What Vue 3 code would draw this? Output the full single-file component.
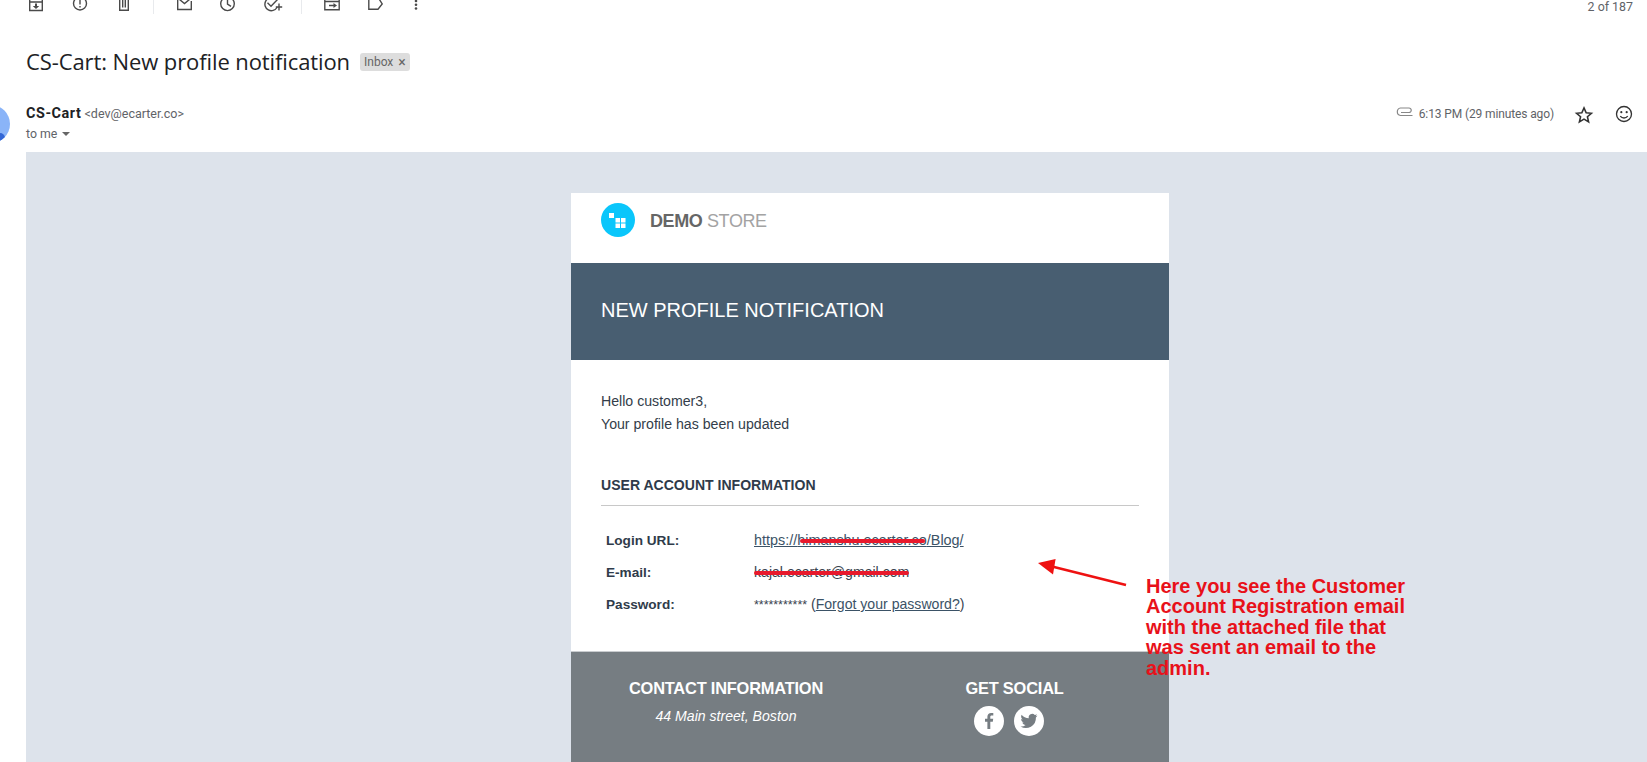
<script setup>
const rows = [
  { label: 'Login URL:', kind: 'url' },
  { label: 'E-mail:', kind: 'mail' },
  { label: 'Password:', kind: 'pass' }
]
</script>

<template>
  <div class="page">
    <div class="toolbar">
      <svg class="ic w14 m29" viewBox="0 0 14 12"><path d="M.7-2V10.500H13.300V-2M.7 2H13.300" /><path class="solid" d="M6 3.500h2V6h2.200L7 9 3.800 6H6z" /></svg>
      <svg class="ic w14 m30" viewBox="0 0 14 12"><circle cx="7" cy="3.500" r="6.500" /><path d="M7 0v4.500M7 6v1.500" /></svg>
      <svg class="ic w10 m32" viewBox="0 0 10 12"><path d="M.7-2V10.300H9.300V-2M3.700 0v7.500M6.300 0v7.500" /></svg>
      <span class="sep m24"></span>
      <svg class="ic w15 m23" viewBox="0 0 15 12"><path d="M.7-1V9.500H14.300V1M.7-2 7.500 3.500 14.300-2" /></svg>
      <svg class="ic w15 m28" viewBox="0 0 15 12"><circle cx="7.500" cy="3.800" r="6.800" /><path d="M7.500 0v4l3.500 2.300" /></svg>
      <svg class="ic w18 m29" viewBox="0 0 18 12"><path d="M13 7.500A6.500 6.500 0 1 1 10 -1.800M3.500 2.800 7 6.200 14-1M15 3.500v7M11.800 7h6.400" /></svg>
      <span class="sep m19"></span>
      <svg class="ic w16 m22" viewBox="0 0 16 12"><path d="M.8-2V9.700H15.200V-2M.8 1.500H15.200M5 5.500h5" /><path class="solid" d="M9.500 3 13 5.500 9.500 8z" /></svg>
      <svg class="ic w15 m28" viewBox="0 0 15 12"><path d="M.8-2V9.200H10L14.200 4 10.500-2" /></svg>
      <svg class="dots" viewBox="0 0 4 12"><circle cx="2" cy="1" r="1.300" /><circle cx="2" cy="4.800" r="1.300" /><circle cx="2" cy="8.500" r="1.300" /></svg>
      <span class="count">2 of 187</span>
    </div>

    <div class="subject-row">
      <h1 class="subject">CS-Cart: New profile notification</h1>
      <span class="chip">Inbox <i>×</i></span>
    </div>

    <div class="sender-row">
      <span class="avatar"><span class="dot"></span></span>
      <div class="sender">
        <div class="from"><b>CS-Cart</b> <span>&lt;dev@ecarter.co&gt;</span></div>
        <div class="to">to me <span class="caret"></span></div>
      </div>
      <div class="meta">
        <svg class="clip" viewBox="0 0 17 10"><path d="M16.500 8.500H4.500A3.800 3.800 0 0 1 4.500 1h8.500a2.200 2.200 0 0 1 0 4.500H5" /></svg>
        <span class="time">6:13 PM (29 minutes ago)</span>
        <svg class="star" viewBox="0 0 24 24"><path d="m12 3.500 2.600 5.800 6.300.6-4.800 4.200 1.400 6.200L12 17l-5.500 3.300 1.400-6.200L3.100 9.900l6.300-.6z" /></svg>
        <svg class="smile" viewBox="0 0 24 24"><circle cx="12" cy="12" r="9" /><circle class="fill" cx="8.800" cy="9.800" r="1.300" /><circle class="fill" cx="15.200" cy="9.800" r="1.300" /><path d="M7.500 14.500c2.400 3 6.600 3 9 0" /></svg>
      </div>
    </div>

    <div class="mail-bg">
      <div class="card">
        <div class="brand">
          <span class="logo">
            <svg viewBox="0 0 34 34"><circle cx="17" cy="17" r="17" fill="#0ac6fb" /><g fill="#fff"><rect x="8" y="10" width="5" height="5" /><rect x="14.500" y="15" width="4.500" height="4.500" /><rect x="20" y="15" width="4.500" height="4.500" /><rect x="14.500" y="20.500" width="4.500" height="4.500" /><rect x="20" y="20.500" width="4.500" height="4.500" /></g></svg>
          </span>
          <span class="store"><b>DEMO</b> STORE</span>
        </div>
        <div class="banner">NEW PROFILE NOTIFICATION</div>
        <div class="body">
          <p class="hello">Hello customer3,<br />Your profile has been updated</p>
          <h2 class="section">USER ACCOUNT INFORMATION</h2>
          <div class="rows">
            <div v-for="r in rows" :key="r.kind" class="row">
              <b class="label">{{ r.label }}</b>
              <span v-if="r.kind === 'url'" class="val url"><a>https://<span class="hidden">himanshu.ecarter.co</span>/Blog/</a><s class="red u"></s></span>
              <span v-else-if="r.kind === 'mail'" class="val">kajal.ecarter@gmail.com<s class="red m"></s></span>
              <span v-else class="val"><span class="stars">***********</span> (<a>Forgot your password?</a>)</span>
            </div>
          </div>
        </div>
        <div class="footer">
          <div class="contact">
            <h3>CONTACT INFORMATION</h3>
            <em>44 Main street, Boston</em>
          </div>
          <div class="social">
            <h3>GET SOCIAL</h3>
            <div class="icons">
              <svg viewBox="0 0 30 30"><circle cx="15" cy="15" r="15" fill="#fff" /><path fill="#767d82" d="M16.300 23v-7.300h2.500l.4-2.900h-2.900V11c0-.8.300-1.400 1.500-1.400h1.500V7c-.3 0-1.200-.1-2.200-.1-2.200 0-3.700 1.300-3.700 3.800v2.100H11v2.900h2.400V23z" /></svg>
              <svg viewBox="0 0 30 30"><circle cx="15" cy="15" r="15" fill="#fff" /><path fill="#767d82" d="M23.500 9.600c-.6.300-1.300.5-2 .6.700-.4 1.300-1.100 1.500-1.900-.7.400-1.400.7-2.200.8a3.500 3.500 0 0 0-6 3.200c-2.900-.1-5.500-1.500-7.200-3.600-.9 1.600-.5 3.600 1.100 4.700-.6 0-1.100-.2-1.600-.4 0 1.700 1.200 3.100 2.800 3.400-.5.100-1 .2-1.600.1.500 1.400 1.700 2.400 3.300 2.400A7 7 0 0 1 6.500 20.400a10 10 0 0 0 15.400-8.900c.6-.5 1.200-1.100 1.600-1.900z" /></svg>
            </div>
          </div>
        </div>
      </div>
    </div>

    <svg class="arrow" viewBox="0 0 90 30"><path d="M8 7 88 27" stroke="#ee1111" stroke-width="2.500" /><path d="M0 5 17.600 1 15 16.600z" fill="#ee1111" /></svg>
    <p class="note">Here you see the Customer Account Registration email with the attached file that was sent an email to the admin.</p>
  </div>
</template>

<style>
html, body { margin: 0; overflow: hidden; background: #fff; }
</style>

<style scoped>
.page { position: relative; width: 1647px; height: 762px; overflow: hidden; background: #fff; font-family: "Roboto", "Liberation Sans", sans-serif; color: #222; }
.toolbar { height: 20px; display: flex; align-items: flex-start; }
.ic { height: 12px; flex: none; fill: none; stroke: #4a4a4a; stroke-width: 1.400; overflow: visible; }
.ic .solid { fill: #4a4a4a; stroke: none; }
.w10 { width: 10px; } .w14 { width: 14px; } .w15 { width: 15px; } .w16 { width: 16px; } .w18 { width: 18px; }
.m19 { margin-left: 19px; } .m22 { margin-left: 22px; } .m23 { margin-left: 23px; } .m24 { margin-left: 24px; } .m28 { margin-left: 28px; } .m29 { margin-left: 29px; } .m30 { margin-left: 30px; } .m32 { margin-left: 32px; }
.dots { width: 4px; height: 12px; flex: none; margin-left: 31px; fill: #4a4a4a; }
.sep { width: 1px; height: 14px; flex: none; background: #e8eaed; }
.count { margin-left: auto; margin-right: 14px; font-size: 12.400px; line-height: 14px; color: #5f6368; }
.subject-row { display: flex; align-items: center; gap: 10px; margin-top: 26px; padding-left: 26px; height: 30px; }
.subject { margin: 0; font-size: 22px; line-height: 30px; font-weight: 400; color: #202124; font-family: "Open Sans", "Roboto", sans-serif; letter-spacing: -0.100px; }
.chip { display: flex; align-items: center; height: 18px; background: #dddddd; color: #666; font-size: 12px; padding: 0 4px; border-radius: 3px; margin-top: 1px; white-space: pre; }
.chip i { font-style: normal; font-size: 14px; margin-left: 2px; }
.sender-row { display: flex; height: 47px; margin-top: 29px; }
.avatar { position: relative; flex: none; margin-left: -28px; margin-right: 16px; width: 38px; height: 38px; border-radius: 50%; background: #8ab4f8; overflow: hidden; }
.dot { position: absolute; left: 23px; top: 28px; width: 10px; height: 10px; border-radius: 50%; background: #3367d6; }
.sender { padding-top: 1px; }
.from { font-size: 12.500px; color: #5f6368; line-height: 16px; }
.from b { font-size: 14.400px; color: #202124; font-weight: 700; letter-spacing: 0.550px; }
.to { font-size: 12.300px; color: #5f6368; line-height: 18px; margin-top: 3px; }
.caret { display: inline-block; width: 0; height: 0; border: 4.500px solid transparent; border-top: 4.500px solid #666; border-bottom: 0; margin: 0 0 2px 2px; }
.meta { margin-left: auto; display: flex; align-items: center; height: 16px; padding-right: 13px; padding-top: 1px; }
.clip { width: 17px; height: 10px; fill: none; stroke: #888; stroke-width: 1.200; margin-right: 6px; margin-top: -4px; flex: none; }
.time { font-size: 12px; color: #5f6368; margin-right: 20px; letter-spacing: -0.120px; }
.star { width: 20px; height: 20px; fill: none; stroke: #333; stroke-width: 1.900; margin-right: 20px; margin-top: 1px; flex: none; }
.smile { width: 20px; height: 20px; fill: none; stroke: #333; stroke-width: 1.600; margin-top: 0; flex: none; }
.smile .fill { fill: #333; stroke: none; }
.mail-bg { margin-left: 26px; height: 610px; box-sizing: border-box; background: #dde3eb; padding-top: 41px; font-family: "Liberation Sans", Arial, sans-serif; }
.card { width: 598px; margin-left: 545px; background: #fff; color: #2f3b4a; }
.brand { height: 70px; display: flex; align-items: flex-start; padding: 10px 0 0 30px; box-sizing: border-box; }
.logo { width: 34px; height: 34px; display: block; }
.logo svg { display: block; }
.store { margin: 8px 0 0 15px; font-size: 18px; color: #a3a3a3; line-height: 20px; letter-spacing: -0.400px; }
.store b { color: #666; }
.banner { height: 97px; background: #485e71; color: #fff; font-size: 20px; line-height: 95px; padding-left: 30px; }
.body { padding: 30px 30px 0; height: 291px; box-sizing: border-box; }
.hello { margin: 0; font-size: 14.150px; line-height: 23px; color: #333d4a; }
.section { margin: 41px 0 0; padding-bottom: 12px; font-size: 14.050px; line-height: 16px; font-weight: 700; color: #2f3b4a; border-bottom: 1px solid #c8c8c8; }
.rows { margin-top: 27px; }
.row { display: flex; height: 32px; font-size: 13.600px; }
.label { width: 153px; flex: none; padding-left: 5px; color: #2f3b4a; box-sizing: border-box; }
.val { position: relative; color: #39434f; margin-top: -1px; font-size: 14.100px; }
.url { font-size: 14.400px; }
.stars { font-size: 12.400px; }
.val a { color: #3b5266; text-decoration: underline; }
.hidden { color: #3b5266; }
.red { position: absolute; height: 4px; border-radius: 2px; background: #e8192c; }
.u { left: 46px; width: 125px; top: 7px; }
.m { left: 0; width: 155px; top: 7px; }
.footer { height: 111px; background: #767d82; border-top: 1px solid #c9cccf; box-sizing: border-box; display: flex; color: #fff; text-align: center; }
.footer h3 { margin: 0; font-size: 16.400px; line-height: 20px; font-weight: 700; letter-spacing: -0.200px; }
.contact { width: 310px; padding-top: 26px; }
.contact em { display: block; margin-top: 9px; font-size: 14.100px; line-height: 18px; }
.social { width: 267px; padding-top: 26px; }
.icons { display: flex; justify-content: center; gap: 10px; margin-top: 8px; margin-left: -11px; }
.icons svg { width: 30px; height: 30px; display: block; }
.arrow { position: absolute; left: 1038px; top: 558px; width: 90px; height: 30px; overflow: visible; fill: none; }
.note { position: absolute; left: 1146px; top: 576px; width: 265px; margin: 0; font-family: "Liberation Sans", Arial, sans-serif; font-weight: 700; font-size: 20px; line-height: 20.400px; color: #e8111a; }
</style>
